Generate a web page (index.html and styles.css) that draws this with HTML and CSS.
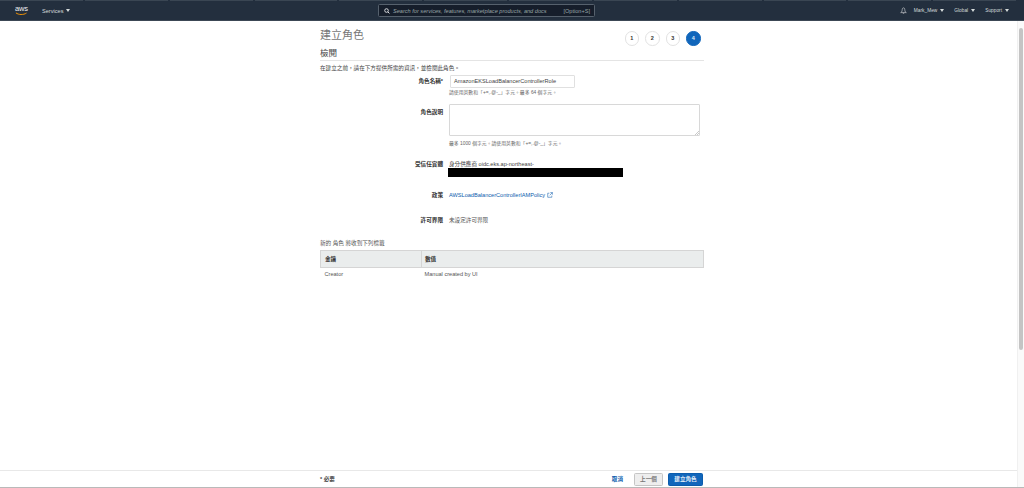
FILE: index.html
```html
<!DOCTYPE html>
<html lang="zh-Hant">
<head>
<meta charset="utf-8">
<title>建立角色</title>
<link rel="stylesheet" href="styles.css">
</head>
<body>
<div class="page">
  <header class="topbar">
    <div class="tabs"><i></i><i></i><i></i><i></i><i></i><i></i><i></i><i></i><i></i><i></i><i></i><i></i></div>
    <div class="navrow">
      <div class="nav-left">
        <a class="logo">aws<svg class="smile" viewBox="0 0 14 4" width="13" height="4"><path d="M1 .8C4 3 9 3.2 12.4 1" fill="none" stroke="#f90" stroke-width="1"/></svg></a>
        <span class="navitem">Services <b class="caret"></b></span>
      </div>
      <div class="search">
        <svg viewBox="0 0 10 10" width="6" height="6"><circle cx="4.2" cy="4.2" r="3" fill="none" stroke="#e5e7ea" stroke-width="1.5"/><path d="M6.5 6.5 9 9" stroke="#e5e7ea" stroke-width="1.6"/></svg>
        <em>Search for services, features, marketplace products, and docs</em>
        <span>[Option+S]</span>
      </div>
      <div class="nav-right">
        <svg class="bell" viewBox="0 0 10 10" width="7" height="7"><path d="M5 1.2C3.4 1.2 3.2 3 3 5S1.6 7.6 1 8h8C8.400 7.600 7.200 7 7 5S6.600 1.200 5 1.200ZM4 9h2" fill="none" stroke="#e5e7ea" stroke-width=".8"/></svg>
        <span class="navitem">Mark_Mew <b class="caret"></b></span>
        <span class="navitem">Global <b class="caret"></b></span>
        <span class="navitem">Support <b class="caret"></b></span>
      </div>
    </div>
  </header>

  <div class="viewport">
    <main class="content">
      <div class="title-row">
        <h1>建立角色</h1>
        <ol class="steps">
          <li>1</li><li>2</li><li>3</li><li class="active">4</li>
        </ol>
      </div>
      <h2>檢閱</h2>
      <p class="intro">在建立之前，請在下方提供所需的資訊，並檢閱此角色。</p>

      <div class="form">
        <div class="row row-name">
          <label>角色名稱*</label>
          <div>
            <div class="input">AmazonEKSLoadBalancerControllerRole</div>
            <p class="hint">請使用英數和「+=,.@-_」字元。最多 64 個字元。</p>
          </div>
        </div>
        <div class="row row-desc">
          <label>角色說明</label>
          <div>
            <div class="textarea"><svg class="grip" viewBox="0 0 6 6" width="4" height="4"><path d="M0 6 6 0M3 6 6 3" stroke="#777" stroke-width=".6"/></svg></div>
            <p class="hint">最多 1000 個字元。請使用英數和「+=,.@-_」字元。</p>
          </div>
        </div>
        <div class="row row-trust">
          <label>受信任實體</label>
          <div class="value">
            <div>身分供應商 oidc.eks.ap-northeast-</div>
            <div class="redact"></div>
          </div>
        </div>
        <div class="row row-policy">
          <label>政策</label>
          <div class="value"><a class="link">AWSLoadBalancerControllerIAMPolicy <svg viewBox="0 0 10 10" width="6" height="6"><path d="M4 2H1.200V8.800H8V6M5.500 1H9V4.500M9 1 4.500 5.500" fill="none" stroke="#0b5cad" stroke-width=".9"/></svg></a></div>
        </div>
        <div class="row row-boundary">
          <label>許可界限</label>
          <div class="value muted">未設定許可界限</div>
        </div>
      </div>

      <p class="tag-intro">新的 角色 將收到下列標籤</p>
      <table class="tags">
        <thead><tr><th class="key">金鑰</th><th>數值</th></tr></thead>
        <tbody><tr><td>Creator</td><td>Manual created by UI</td></tr></tbody>
      </table>
    </main>
  </div>

  <footer class="footer">
    <div class="footer-inner">
      <span class="required">* 必要</span>
      <div class="actions">
        <a class="cancel">取消</a>
        <button class="btn btn-prev">上一個</button>
        <button class="btn btn-primary">建立角色</button>
      </div>
    </div>
  </footer>

  <div class="scrolltrack"><div class="thumb"></div></div>
</div>
</body>
</html>
```
FILE: styles.css
```css
html, body {
  margin: 0;
  padding: 0;
  height: 100%;
  overflow: hidden;
  background: #fff;
}
body {
  font-family: "Liberation Sans", "Noto Sans CJK TC", sans-serif;
  font-size: 5.6px;
  line-height: 8px;
  color: #444;
}
* { box-sizing: border-box; }
p, h1, h2, ol { margin: 0; padding: 0; }

.page {
  position: relative;
  height: 488px;
  display: flex;
  flex-direction: column;
}

/* Top bar */
.topbar {
  height: 21px;
  flex: none;
  background: #232f3e;
  border-bottom: 1px solid #3c4855;
}
.tabs {
  height: 1px;
  display: grid;
  grid-template-columns: repeat(12, 1fr);
  gap: 2px;
  padding-right: 8px;
}
.tabs i { background: #3a4653; }
.navrow {
  height: 19px;
  display: grid;
  grid-template-columns: 378px 217px 1fr;
  align-items: center;
}
.nav-left {
  display: flex;
  align-items: center;
  gap: 14px;
  padding-left: 15px;
}
.logo {
  position: relative;
  width: 13px;
  height: 11px;
  color: #eef0f2;
  font-size: 7.500px;
  line-height: 8px;
  letter-spacing: -.2px;
}
.smile { position: absolute; left: 0; top: 6.500px; }
.navitem {
  color: #d5dbdb;
  display: inline-flex;
  align-items: center;
  gap: 3px;
  white-space: nowrap;
}
.caret {
  width: 0;
  height: 0;
  border-left: 2px solid transparent;
  border-right: 2px solid transparent;
  border-top: 3px solid #d5dbdb;
}
.search {
  height: 13px;
  display: flex;
  align-items: center;
  gap: 3px;
  padding: 0 4px 0 5px;
  background: #161e2b;
  border: 1px solid #56616d;
  border-radius: 1.500px;
  color: #98a4a6;
}
.search em { flex: 1; }
.nav-right {
  display: flex;
  align-items: center;
  justify-content: flex-end;
  gap: 10px;
  padding-right: 15px;
  font-size: 4.800px;
}
.bell { margin-right: -3px; }

/* Body viewport */
.viewport {
  flex: 1;
  min-height: 0;
}
.content {
  width: 384px;
  margin-left: 320px;
}
.title-row {
  display: flex;
  justify-content: space-between;
  align-items: flex-start;
  height: 27px;
  padding-top: 7px;
}
h1 {
  font-size: 11px;
  line-height: 14px;
  font-weight: 400;
  color: #777;
}
.steps {
  list-style: none;
  display: flex;
  gap: 6px;
  margin-top: 3px;
  margin-right: 3.500px;
}
.steps li {
  width: 14.500px;
  height: 14.500px;
  border: 1px solid #e2e2e2;
  border-radius: 50%;
  display: grid;
  place-items: center;
  font-weight: 700;
  font-size: 5.500px;
  color: #333;
}
.steps li.active {
  background: #1166bb;
  border-color: #1166bb;
  color: #dce9f6;
}
h2 {
  font-size: 8.500px;
  line-height: 10px;
  font-weight: 400;
  color: #444;
  height: 13px;
  border-bottom: 1px solid #e4e4e4;
}
.intro { margin-top: 3px; }

/* Form rows */
.form { margin-top: 3px; }
.row {
  display: grid;
  grid-template-columns: 123px 1fr;
  column-gap: 6px;
}
.row label {
  text-align: right;
  font-weight: 700;
  color: #333;
}
.row-name { height: 29px; }
.row-name label { padding-top: 2px; }
.row-desc { height: 56px; }
.row-desc label { padding-top: 4px; }
.row-trust { height: 31px; }
.row-policy { height: 25px; }
.row-boundary { height: 23px; }
.input {
  width: 125px;
  height: 13px;
  margin-left: 1px;
  padding: 0 3px;
  line-height: 11px;
  border: 1px solid #e0e0e0;
  border-radius: 1px;
  color: #444;
}
.textarea {
  position: relative;
  width: 251px;
  height: 32px;
  border: 1px solid #d8d8d8;
  border-radius: 1px;
}
.grip { position: absolute; right: 0; bottom: 0; }
.hint {
  margin-top: 1px;
  font-size: 4.850px;
  color: #666;
}
.row-desc .hint { margin-top: 4px; }
.redact {
  width: 175px;
  height: 9px;
  margin-left: -1px;
  background: #000;
}
.link { color: #0b5cad; }
.link svg { vertical-align: -1px; }
.muted { color: #555; }
.tag-intro { color: #555; }

/* Tags table */
.tags {
  width: 100%;
  margin-top: 3px;
  border-collapse: collapse;
}
.tags th {
  height: 17px;
  padding: 0 3px 0 4px;
  text-align: left;
  font-weight: 700;
  color: #333;
  background: #eaeded;
  border: 1px solid #d5d5d5;
  border-width: 1px 1px 1px 0;
}
.tags th:first-child { border-left: 1px solid #d5d5d5; }
.tags th.key { width: 101px; }
.tags td {
  height: 12px;
  padding: 0 4px;
  color: #555;
}
.tags th + th, .tags td + td { padding-left: 3px; }

/* Scrollbar */
.scrolltrack {
  position: absolute;
  right: 0;
  top: 21px;
  bottom: 1px;
  width: 7px;
  background: #fafafa;
  border-left: 1px solid #f0f0f0;
}
.thumb {
  width: 3.500px;
  height: 322px;
  margin: 7px 0 0 1px;
  background: #c4c4c4;
  border-radius: 2px;
}

/* Footer */
.footer {
  flex: none;
  height: 18px;
  background: #fff;
  border-top: 1px solid #e8e8e8;
  border-bottom: 1px solid #b9b9b9;
}
.footer-inner {
  width: 384px;
  margin-left: 320px;
  height: 16px;
  display: flex;
  align-items: center;
  justify-content: space-between;
}
.required { font-weight: 700; color: #444; }
.actions {
  display: flex;
  align-items: center;
  gap: 5px;
  padding-right: 1px;
}
.cancel { color: #0b5cad; font-weight: 700; margin-right: 6px; }
.btn {
  height: 13px;
  padding: 0;
  font: inherit;
  font-weight: 700;
  border-radius: 1.500px;
  display: grid;
  place-items: center;
}
.btn-prev {
  width: 29px;
  color: #777;
  background: #eee;
  border: 1px solid #c5c5c5;
}
.btn-primary {
  width: 35px;
  color: #e6eef7;
  background: #1166bb;
  border: 1px solid #0b5cad;
}
```
